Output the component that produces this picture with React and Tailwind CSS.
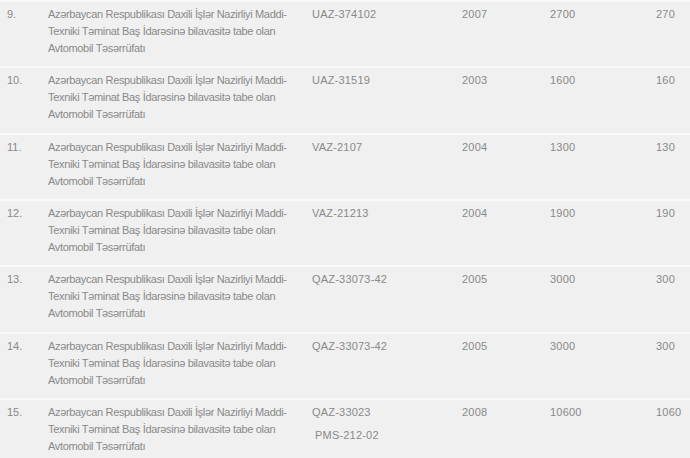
const rows = [
  ["9.", "UAZ-374102", null, "2007", "2700", "270"],
  ["10.", "UAZ-31519", null, "2003", "1600", "160"],
  ["11.", "VAZ-2107", null, "2004", "1300", "130"],
  ["12.", "VAZ-21213", null, "2004", "1900", "190"],
  ["13.", "QAZ-33073-42", null, "2005", "3000", "300"],
  ["14.", "QAZ-33073-42", null, "2005", "3000", "300"],
  ["15.", "QAZ-33023", "PMS-212-02", "2008", "10600", "1060"],
];

export default function App() {
  return (
    <div className="w-[690px] h-[458px] overflow-hidden bg-[#f0f0f0] text-[11px] leading-[17px] text-[#898989]" style={{ fontFamily: '"Liberation Sans", Arial, sans-serif' }}>
      {rows.map((r, i) => (
        <div key={i} className="grid grid-cols-[48px_264px_150px_88px_106px_1fr] border-t-2 border-[#f9f9f9] pt-[4px] pb-[9.33px]">
          <div className="pl-[7px]">{r[0]}</div>
          <div className="tracking-[-0.33px] whitespace-nowrap">
            <div>Azərbaycan Respublikası Daxili İşlər Nazirliyi Maddi-</div>
            <div>Texniki Təminat Baş İdarəsinə bilavasitə tabe olan</div>
            <div>Avtomobil Təsərrüfatı</div>
          </div>
          <div className="tracking-[0.2px]">
            <div>{r[1]}</div>
            {r[2] && <div className="mt-[6px] pl-[3px]">{r[2]}</div>}
          </div>
          <div className="tracking-[0.2px]">{r[3]}</div>
          <div className="tracking-[0.2px]">{r[4]}</div>
          <div className="tracking-[0.2px]">{r[5]}</div>
        </div>
      ))}
    </div>
  );
}
